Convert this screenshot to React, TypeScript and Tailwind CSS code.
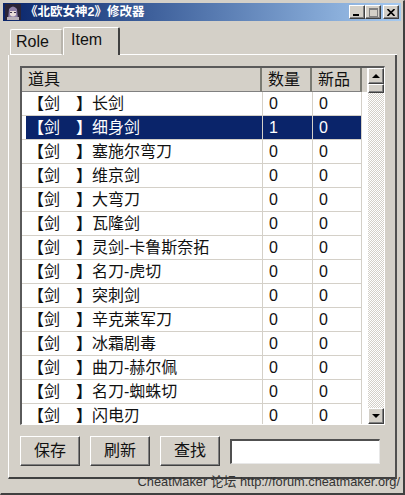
const FONT = "font-['Liberation_Sans','Noto_Sans_CJK_SC',sans-serif]";

const raised =
  "border border-t-white border-l-white border-r-[#404040] border-b-[#404040] shadow-[inset_-1px_-1px_0_#808080]";

const items = [
  "长剑",
  "细身剑",
  "塞施尔弯刀",
  "维京剑",
  "大弯刀",
  "瓦隆剑",
  "灵剑-卡鲁斯奈拓",
  "名刀-虎切",
  "突刺剑",
  "辛克莱军刀",
  "冰霜剧毒",
  "曲刀-赫尔佩",
  "名刀-蜘蛛切",
  "闪电刃",
];

function CaptionButton({ children }: { children: React.ReactNode }) {
  return (
    <div className={`w-4 h-[14px] bg-[#d4d0c8] flex items-center justify-center ${raised}`}>{children}</div>
  );
}

function TitleBar() {
  return (
    <div className="h-[18px] flex items-center bg-gradient-to-r from-[#0a246a] to-[#a6caf0] pl-[2px] pr-[2px]">
      <svg width="16" height="16" viewBox="0 0 16 16" className="shrink-0">
        <rect width="16" height="16" fill="#2a2438" />
        <path d="M3 16 L4 5 Q8 0 12 5 L13 16 Z" fill="#8d7fa8" />
        <path d="M5 7 H11 V11 Q8 14 5 11 Z" fill="#e8dcd8" />
        <path d="M2 13 H14 V16 H2 Z" fill="#b8b0b8" />
        <path d="M5 8 H7 V9 H5 Z M9 8 H11 V9 H9 Z" fill="#3a3048" />
      </svg>
      <span className="ml-[4px] text-white text-[12.5px] font-bold leading-none whitespace-nowrap">《北欧女神2》修改器</span>
      <div className="ml-auto flex">
        <CaptionButton>
          <span className="w-[6px] h-[2px] bg-black mt-[6px] mr-[2px]" />
        </CaptionButton>
        <CaptionButton>
          <span className="w-[9px] h-[9px] border border-[#808080] border-t-2" />
        </CaptionButton>
        <div className="ml-[2px]">
          <CaptionButton>
            <svg width="8" height="7" viewBox="0 0 8 7">
              <path d="M0.5 0 L7.5 7 M7.5 0 L0.5 7" stroke="#000" strokeWidth="1.6" />
            </svg>
          </CaptionButton>
        </div>
      </div>
    </div>
  );
}

function Tabs() {
  return (
    <div className="flex items-end h-[28px] pl-[2px] relative z-10">
      <div className="w-[53px] h-[26px] border-t border-l border-white border-r-2 border-r-[#b8b4ac] rounded-t-[2px] pl-[5px] text-[16px] leading-[23px] text-[#111] border-b border-b-white">
        Role
      </div>
      <div className="w-[57px] h-[28px] bg-[#d4d0c8] border-t border-l border-white border-r-2 border-r-[#404040] rounded-t-[2px] pl-[7px] text-[16px] leading-[24px] text-[#111]">
        Item
      </div>
      <div className="flex-1 border-b border-white" />
    </div>
  );
}

function Scrollbar() {
  return (
    <div className="w-[16px] flex flex-col bg-[repeating-conic-gradient(#d4d0c8_0_25%,#ffffff_0_50%)] bg-[length:2px_2px]">
      <div className={`h-[16px] shrink-0 bg-[#d4d0c8] flex items-center justify-center ${raised}`}>
        <span className="w-0 h-0 border-x-[4px] border-x-transparent border-b-[4px] border-b-black" />
      </div>
      <div className={`h-[9px] shrink-0 bg-[#d4d0c8] ${raised}`} />
      <div className="flex-1" />
      <div className={`h-[16px] shrink-0 bg-[#d4d0c8] flex items-center justify-center ${raised}`}>
        <span className="w-0 h-0 border-x-[4px] border-x-transparent border-t-[4px] border-t-black" />
      </div>
    </div>
  );
}

function ItemTable() {
  return (
    <div className="w-[365px] h-[359px] flex border border-t-2 border-l-2 border-t-[#5a5a5a] border-l-[#5a5a5a] border-r-white border-b-white bg-white overflow-hidden">
      <div className="w-[345px] shrink-0 flex flex-col">
        <div className="grid grid-cols-[240px_50px_50px_5px] h-[24px] shrink-0 bg-[#d4d0c8] text-[16px] leading-[23px] text-[#111]">
          <div className="pl-[6px] border-r-2 border-r-[#7a7a72] border-b border-b-[#808080]">道具</div>
          <div className="pl-[6px] border-r-2 border-r-[#7a7a72] border-b border-b-[#808080]">数量</div>
          <div className="pl-[6px] border-r-2 border-r-[#7a7a72] border-b border-b-[#808080]">新品</div>
          <div />
        </div>
        {items.map((name, i) => {
          const cell = i === 1 ? "bg-[#0a246a] text-white" : "text-[#111]";
          return (
            <div key={name} className="grid grid-cols-[4px_236px_50px_50px] h-[24px] shrink-0 text-[16px] leading-[23px]">
              <div className="border-b border-[#d4d0c8]" />
              <div className={`flex whitespace-nowrap border-b border-[#d4d0c8] ${cell}`}>
                <span className="w-[66px] shrink-0 flex">
                  <span className="ml-[2px] w-[16px] font-bold text-right">【</span>
                  <span>剑</span>
                  <span className="ml-[16px] w-[16px] font-bold text-left">】</span>
                </span>
                <span>{name}</span>
              </div>
              <div className={`pl-[6px] border-b border-l border-[#d4d0c8] ${cell}`}>{i === 1 ? 1 : 0}</div>
              <div className={`pl-[6px] border-b border-x border-[#d4d0c8] ${cell}`}>0</div>
            </div>
          );
        })}
      </div>
      <div className="w-[1px] shrink-0" />
      <Scrollbar />
    </div>
  );
}

function ActionButton({ label }: { label: string }) {
  return (
    <button className={`w-[60px] h-[30px] bg-[#d4d0c8] text-[16px] text-[#111] ${raised}`}>{label}</button>
  );
}

export default function App() {
  return (
    <div className={`${FONT} relative w-[405px] h-[495px] bg-[#d4d0c8] border border-b-2 border-r-2 border-t-[#d4d0c8] border-l-[#d4d0c8] border-r-[#404040] border-b-[#404040] p-[2px] overflow-hidden`}>
      <TitleBar />
      <div className="pl-[5px] pr-[4px] pt-[6px]">
        <Tabs />
        <div className="h-[424px] border-l border-white border-r-2 border-r-[#505050] border-b-2 border-b-[#404040] pl-[11px] pt-[11px]">
          <ItemTable />
          <div className="flex items-center gap-[10px] mt-[11px]">
            <ActionButton label="保存" />
            <ActionButton label="刷新" />
            <ActionButton label="查找" />
            <input
              className="w-[150px] h-[25px] bg-white border border-t-2 border-l-2 border-t-[#505050] border-l-[#505050] border-r-[#e8e8e8] border-b-[#e8e8e8] outline-none"
              readOnly
            />
          </div>
        </div>
      </div>
      <div className="absolute right-[3px] bottom-[4px] text-[12.8px] leading-[15px] text-[#333] whitespace-nowrap">
        CheatMaker 论坛 http://forum.cheatmaker.org/
      </div>
    </div>
  );
}
